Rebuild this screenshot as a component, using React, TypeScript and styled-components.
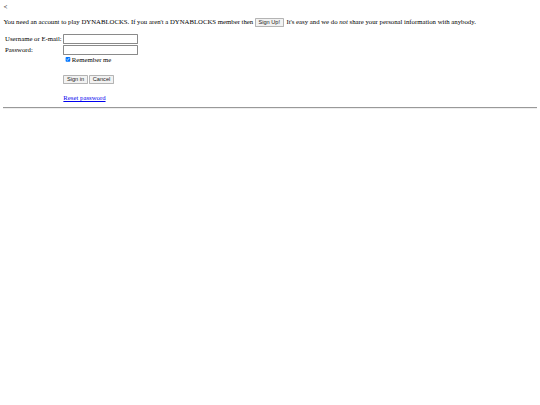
import React from "react";
import styled, { createGlobalStyle } from "styled-components";

const Global = createGlobalStyle`
  html { zoom: 0.421875; background: #fff; }
  body {
    margin: 8px;
    font-family: "Liberation Serif", "Times New Roman", serif;
    font-size: 16px;
    color: #000;
  }
`;

const Back = styled.div`
  line-height: 18px;
`;

const Intro = styled.p`
  margin: 16px 0;
  line-height: 18px;
`;

const Btn = styled.button`
  font-family: "Liberation Sans", Arial, sans-serif;
  font-size: 13.33px;
  padding: 1px 6px;
  border: 1px solid #b4b4b4;
  border-radius: 2px;
  background: #f2f2f2;
  color: #222;
  margin: ${(p: { $gap?: boolean }) => (p.$gap ? "0 4px 0 0" : "0")};
`;

const InlineBtn = styled(Btn)`
  margin: 0 7px 0 4px;
`;

const FormTable = styled.table`
  border-spacing: 2px;
  margin-left: 2px;
`;

const Label = styled.td`
  padding: 1px 3px 1px 2px;
  white-space: nowrap;
`;

const Cell = styled.td`
  padding: 1px;
`;

const Field = styled.input`
  width: 167px;
  height: 17px;
  padding: 1px 2px;
  border: 1px solid #8a8a8a;
  border-radius: 2px;
  font-size: 13.33px;
  margin: 0;
`;

const CheckRow = styled.label`
  display: flex;
  align-items: center;
`;

const Check = styled.input`
  margin: 3px 3px 3px 4px;
  width: 13px;
  height: 13px;
  accent-color: #0075ff;
`;

const Spacer = styled.div`
  height: ${(p: { $h: number }) => p.$h}px;
`;

const ResetLink = styled.a`
  color: #0000ee;
  text-decoration: underline;
`;

const Rule = styled.hr`
  margin: 13px 0 8px;
  border: none;
  border-top: 1px solid #999;
  border-bottom: 1px solid #eee;
`;

export default function App() {
  return (
    <>
      <Global />
      <Back>&lt;</Back>
      <Intro>
        You need an account to play DYNABLOCKS. If you aren't a DYNABLOCKS member then
        <InlineBtn>Sign Up!</InlineBtn>
        It's easy and we do <em>not</em> share your personal information with anybody.
      </Intro>
      <FormTable>
        <tbody>
          <tr>
            <Label>Username or E-mail:</Label>
            <Cell>
              <Field type="text" />
            </Cell>
          </tr>
          <tr>
            <Label>Password:</Label>
            <Cell>
              <Field type="password" />
            </Cell>
          </tr>
          <tr>
            <Cell />
            <Cell>
              <CheckRow>
                <Check type="checkbox" defaultChecked />
                Remember me
              </CheckRow>
              <Spacer $h={27} />
              <div>
                <Btn $gap>Sign in</Btn>
                <Btn>Cancel</Btn>
              </div>
              <Spacer $h={25} />
              <ResetLink href="#">Reset password</ResetLink>
            </Cell>
          </tr>
        </tbody>
      </FormTable>
      <Rule />
    </>
  );
}
